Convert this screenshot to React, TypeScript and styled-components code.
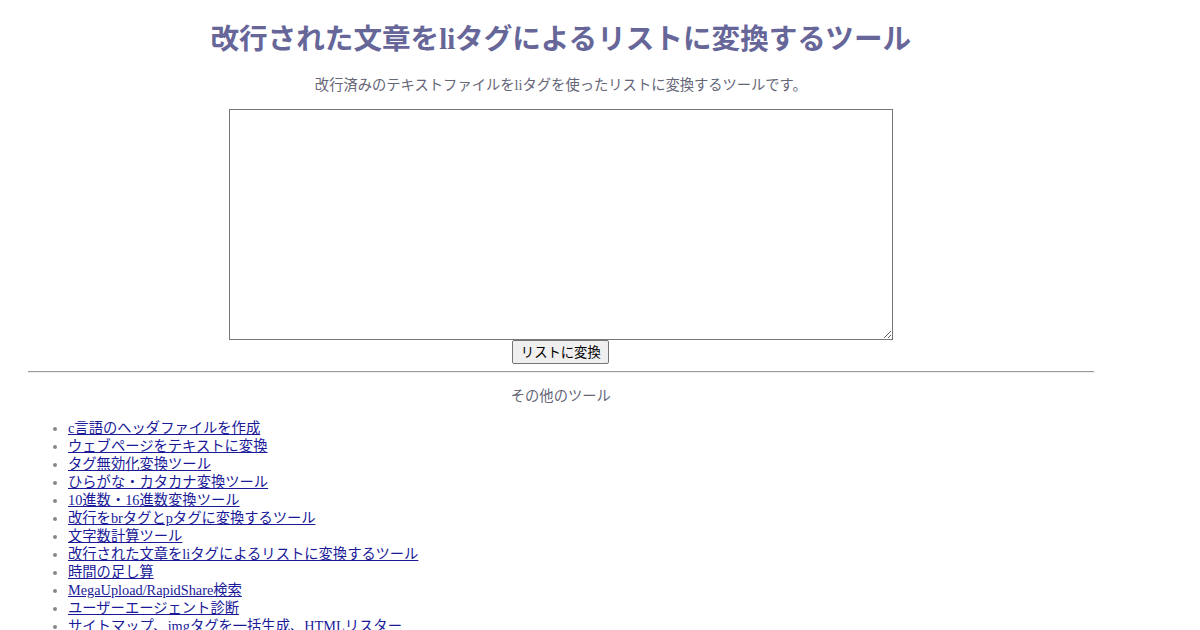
import React from "react";
import styled, { createGlobalStyle } from "styled-components";

const GlobalStyle = createGlobalStyle`
  body {
    margin: 8px;
    background: #fff;
    font-family: "Liberation Serif", "Noto Sans CJK JP", serif;
  }
`;

const Wrapper = styled.div`
  width: 90%;
  margin-left: 20px;
`;

const Title = styled.h1`
  margin: 12px 0 15px;
  font-size: 28.6px;
  line-height: 40px;
  font-weight: bold;
  text-align: center;
  color: #666699;
`;

const Lead = styled.p`
  margin: 0 0 14px;
  font-size: 14.3px;
  line-height: 20px;
  text-align: center;
  color: #666677;
`;

const Form = styled.form`
  display: flex;
  flex-direction: column;
  align-items: center;
`;

const Input = styled.textarea`
  box-sizing: border-box;
  width: 664px;
  height: 231px;
  margin: 0;
  border: 1px solid #767676;
  display: block;
`;

const Submit = styled.button`
  box-sizing: border-box;
  width: 97px;
  height: 24px;
  padding: 0;
  font-family: "Noto Sans CJK JP", sans-serif;
  font-size: 13.33px;
  line-height: 16px;
  color: #000;
  background: #efefef;
  border: 1px solid #767676;
  border-radius: 2px;
`;

const Rule = styled.hr`
  margin: 7px 0 13px;
  border: 0;
  border-top: 1px solid #999;
  border-bottom: 1px solid #eee;
`;

const SectionTitle = styled.p`
  margin: 0 0 13px;
  font-size: 14.3px;
  line-height: 20px;
  text-align: center;
  color: #666677;
`;

const ToolList = styled.ul`
  margin: 0;
  padding-left: 40px;
  font-size: 14.3px;
  line-height: 18px;
  color: #888;
`;

const ToolLink = styled.a`
  color: #1a1a99;
  text-decoration: underline;
`;

const tools = [
  "c言語のヘッダファイルを作成",
  "ウェブページをテキストに変換",
  "タグ無効化変換ツール",
  "ひらがな・カタカナ変換ツール",
  "10進数・16進数変換ツール",
  "改行をbrタグとpタグに変換するツール",
  "文字数計算ツール",
  "改行された文章をliタグによるリストに変換するツール",
  "時間の足し算",
  "MegaUpload/RapidShare検索",
  "ユーザーエージェント診断",
  "サイトマップ、imgタグを一括生成、HTMLリスター",
];

export default function App() {
  return (
    <>
      <GlobalStyle />
      <Wrapper>
        <Title>改行された文章をliタグによるリストに変換するツール</Title>
        <Lead>改行済みのテキストファイルをliタグを使ったリストに変換するツールです。</Lead>
        <Form onSubmit={(e) => e.preventDefault()}>
          <Input />
          <Submit type="submit">リストに変換</Submit>
        </Form>
        <Rule />
        <SectionTitle>その他のツール</SectionTitle>
        <ToolList>
          {tools.map((t) => (
            <li key={t}>
              <ToolLink href="#">{t}</ToolLink>
            </li>
          ))}
        </ToolList>
      </Wrapper>
    </>
  );
}
